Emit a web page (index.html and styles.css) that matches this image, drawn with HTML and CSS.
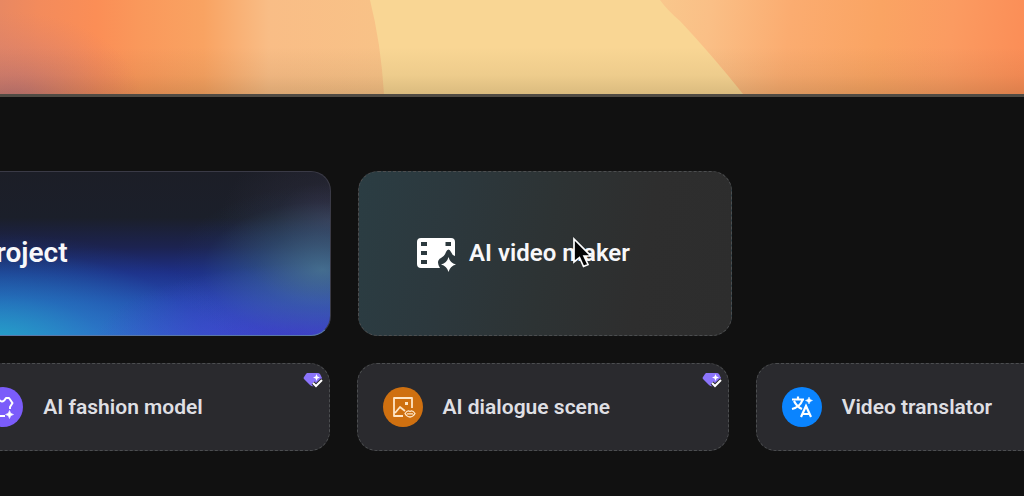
FILE: index.html
```
<!DOCTYPE html>
<html lang="en">
<head>
  <meta charset="UTF-8">
  <title>Home</title>
  <link rel="stylesheet" href="styles.css">
</head>
<body>
  <header class="banner">
    <svg class="banner-art" viewBox="0 0 1024 94" preserveAspectRatio="none" aria-hidden="true">
      <defs>
        <linearGradient id="warmLeft" gradientUnits="userSpaceOnUse" x1="0" y1="0" x2="384" y2="0">
          <stop offset="0" stop-color="#e88862"/>
          <stop offset="0.1" stop-color="#f38b5c"/>
          <stop offset="0.25" stop-color="#fb8e56"/>
          <stop offset="0.36" stop-color="#fa985b"/>
          <stop offset="0.53" stop-color="#f9a362"/>
          <stop offset="0.7" stop-color="#f9bd86"/>
          <stop offset="1" stop-color="#f8c287"/>
        </linearGradient>
        <radialGradient id="mauve" gradientUnits="userSpaceOnUse" cx="0" cy="0" r="1" gradientTransform="translate(14 108) scale(130 96)">
          <stop offset="0" stop-color="#b87080" stop-opacity="0.9"/>
          <stop offset="0.5" stop-color="#cc7a72" stop-opacity="0.5"/>
          <stop offset="1" stop-color="#d87f6c" stop-opacity="0"/>
        </radialGradient>
        <linearGradient id="warmRight" gradientUnits="userSpaceOnUse" x1="660" y1="0" x2="1024" y2="40">
          <stop offset="0" stop-color="#f9c78c"/>
          <stop offset="0.14" stop-color="#fabf86"/>
          <stop offset="0.36" stop-color="#fbac70"/>
          <stop offset="0.6" stop-color="#faa463"/>
          <stop offset="0.8" stop-color="#fb9b61"/>
          <stop offset="1" stop-color="#fb8e57"/>
        </linearGradient>
        <linearGradient id="shade" x1="0" y1="0" x2="0" y2="1">
          <stop offset="0.5" stop-color="#3c3010" stop-opacity="0"/>
          <stop offset="0.8" stop-color="#3c3010" stop-opacity="0.06"/>
          <stop offset="1" stop-color="#3c3010" stop-opacity="0.16"/>
        </linearGradient>
      </defs>
      <rect width="1024" height="94" fill="#f9d694"/>
      <path d="M0 0H370Q381 44 384 94H0Z" fill="url(#warmLeft)"/>
      <rect width="150" height="94" fill="url(#mauve)"/>
      <path d="M660 0H1024V94H743Q712 55 680 21Q667 10 660 0Z" fill="url(#warmRight)"/>
      <rect width="1024" height="94" fill="url(#shade)"/>
    </svg>
  </header>

  <main class="workspace">
    <div class="row row-main">
      <button class="card project">
        <svg class="main-icon" viewBox="0 0 40 40" aria-hidden="true">
          <path d="M20 5V35M5 20H35" stroke="#fff" stroke-width="4" stroke-linecap="round"/>
        </svg>
        <span>Create project</span>
      </button>
      <button class="card maker">
        <svg class="main-icon" viewBox="0 0 40 40" aria-hidden="true">
          <path fill="#fff" fill-rule="evenodd" d="M5 5H35Q39 5 39 9V23Q36 22 35 19Q34 16.500 32.500 16.500Q31 16.500 30 19Q28.500 23.500 25 25Q22 26.500 22 29.500Q22 32 24 35H5Q1 35 1 31V9Q1 5 5 5ZM5 9V13H11V9ZM5 18V22H11V18ZM5 27V31H11V27ZM29.500 9V13H35V9Z"/>
          <path fill="#fff" d="M32.500 24Q34 30 40 31.500Q34 33 32.500 39Q31 33 25 31.500Q31 30 32.500 24Z"/>
        </svg>
        <span>AI video maker</span>
        <svg class="pointer" viewBox="0 0 20 34" aria-hidden="true">
          <path d="M2 3V26L7.500 21.500L11.500 30.500L16 28.500L12 20H19Z" fill="#050505" stroke="#fff" stroke-width="1.700"/>
        </svg>
      </button>
    </div>

    <div class="row row-tools">
      <button class="card tool" aria-label="More tools"></button>
      <button class="card tool">
        <span class="tool-icon purple">
          <svg viewBox="0 0 40 40" aria-hidden="true">
            <path d="M22 29H12V20L9 17L12 11H15Q19 18 23 11H26L29.500 16L27 20V22" fill="none" stroke="#fff" stroke-width="2" stroke-linejoin="round"/>
            <path d="M26.500 23.500Q27 27 30.500 27.500Q27 28 26.500 31.500Q26 28 22.500 27.500Q26 27 26.500 23.500Z" fill="#fff" stroke="#fff" stroke-width="0.600"/>
          </svg>
        </span>
        <span>AI fashion model</span>
        <svg class="badge" viewBox="0 0 20 16" aria-hidden="true">
          <path d="M4 1H15Q16 1 17 2L19 6L11 14Q9 15 7 13L1 7Q0 6 1 5L3 2Z" fill="#8b74fb"/>
          <path d="M13.500 2L14.500 4.500L17 5.500L14.500 6.500L13.500 9L12.500 6.500L10 5.500L12.500 4.500Z" fill="#fff"/>
          <path d="M10 11L13 14L19 8" fill="none" stroke="#2a2a2e" stroke-width="4"/>
          <path d="M10 11L13 14L19 8" fill="none" stroke="#fff" stroke-width="2"/>
        </svg>
      </button>
      <button class="card tool">
        <span class="tool-icon orange">
          <svg viewBox="0 0 40 40" aria-hidden="true">
            <path d="M20 29H11V11H29V21M12 26L17 20L22 24" fill="none" stroke="#ffe6c6" stroke-width="1.800" stroke-linejoin="round"/>
            <rect x="22" y="15" width="3" height="3" fill="#ffe6c6"/>
            <path d="M22 26.500Q24 23.500 26 24L27 24.500L28 24Q30 23.500 32 26.500Q30 30 27 30Q24 30 22 26.500ZM24 26.800H30" fill="#cf7010" stroke="#ffe6c6" stroke-width="1.300"/>
          </svg>
        </span>
        <span>AI dialogue scene</span>
        <svg class="badge" viewBox="0 0 20 16" aria-hidden="true">
          <path d="M4 1H15Q16 1 17 2L19 6L11 14Q9 15 7 13L1 7Q0 6 1 5L3 2Z" fill="#8b74fb"/>
          <path d="M13.500 2L14.500 4.500L17 5.500L14.500 6.500L13.500 9L12.500 6.500L10 5.500L12.500 4.500Z" fill="#fff"/>
          <path d="M10 11L13 14L19 8" fill="none" stroke="#2a2a2e" stroke-width="4"/>
          <path d="M10 11L13 14L19 8" fill="none" stroke="#fff" stroke-width="2"/>
        </svg>
      </button>
      <button class="card tool">
        <span class="tool-icon blue">
          <svg viewBox="0 0 40 40" aria-hidden="true">
            <path d="M10 12.500H22M16 9.500V12.500M12 14Q15 20 20 22M20.500 13Q18 20 10 22M19 30L24 19L29 30M21 27H27" fill="none" stroke="#fff" stroke-width="2.200"/>
            <path d="M27 10Q27.500 13 30.500 13.500Q27.500 14 27 17Q26.500 14 23.500 13.500Q26.500 13 27 10Z" fill="#fff" stroke="#fff" stroke-width="0.500"/>
          </svg>
        </span>
        <span>Video translator</span>
      </button>
    </div>
  </main>
</body>
</html>
```
FILE: styles.css
```
* {
    box-sizing: border-box;
}
body {
    margin: 0;
    background-color: #111111;
    color: #F8F8FA;
    font-family: Roboto, "Liberation Sans", sans-serif;
    overflow: hidden;
}
.banner {
    border-bottom: 3px solid #504B44;
}
.banner-art {
    display: block;
    width: 100%;
    height: 94px;
}
/* the board is wider than the window and runs off both sides */
.workspace {
    display: flex;
    flex-direction: column;
    gap: 27px;
    margin: 0 -104px 0 -442px;
    padding: 74px 0 45px;
}
.row {
    display: grid;
    gap: 27px;
}
.row-main {
    grid-template-columns: 773fr 374fr 369fr;
}
.row-tools {
    grid-template-columns: repeat(4, 1fr);
}
.card {
    position: relative;
    display: flex;
    align-items: center;
    border: 1px dashed #4C4E50;
    border-radius: 20px;
    color: inherit;
    font-family: inherit;
    font-weight: 600;
    cursor: pointer;
}
.project,
.maker {
    justify-content: center;
    gap: 13px;
    height: 165px;
    font-size: 24px;
}
.project {
    padding: 0 0 2px 16px;
    border: 1px solid #3A3A46;
    border-bottom-color: #5A78A8;
    background:
        radial-gradient(ellipse 150px 85px at 99% 60%, rgba(76, 124, 148, 0.8), rgba(60, 110, 145, 0.4) 45%, rgba(40, 80, 130, 0.08) 80%, transparent),
        radial-gradient(ellipse 110px 80px at 100% 30%, rgba(70, 62, 88, 0.6), rgba(50, 48, 66, 0.3) 50%, transparent),
        radial-gradient(ellipse 220px 80px at 98% 105%, rgba(64, 58, 204, 1), rgba(62, 66, 204, 0.6) 50%, transparent),
        radial-gradient(ellipse 250px 110px at 56% 105%, rgba(34, 172, 200, 0.9), rgba(34, 150, 200, 0.45) 45%, rgba(30, 100, 180, 0.08) 85%, transparent),
        linear-gradient(180deg, #1C1E27 0%, #1B1F2A 28%, #1C2350 46%, #1E3088 62%, #2648AE 80%, #345CC8 100%);
    font-size: 28px;
}
.maker {
    padding: 0 44px 2px 0;
    background: linear-gradient(100deg, #2B3D43 0%, #2C383D 25%, #2D3334 50%, #2E2E2E 75%, #2D2D2D 100%);
}
.main-icon {
    width: 40px;
    height: 40px;
    fill: none;
}
.tool {
    gap: 20px;
    height: 88px;
    padding: 0 25px;
    background-color: #2A2A2E;
    color: #DFDFE3;
    font-size: 21px;
}
.tool-icon {
    width: 40px;
    height: 40px;
    border-radius: 50%;
}
.tool-icon svg {
    display: block;
}
.purple {
    background-color: #7B5CFA;
}
.orange {
    background-color: #CF7010;
}
.blue {
    background-color: #0A84FF;
}
.badge {
    position: absolute;
    top: 8px;
    right: 6px;
    width: 20px;
    height: 16px;
}
.pointer {
    position: absolute;
    top: 64px;
    left: 213px;
    width: 20px;
    height: 34px;
}
```
